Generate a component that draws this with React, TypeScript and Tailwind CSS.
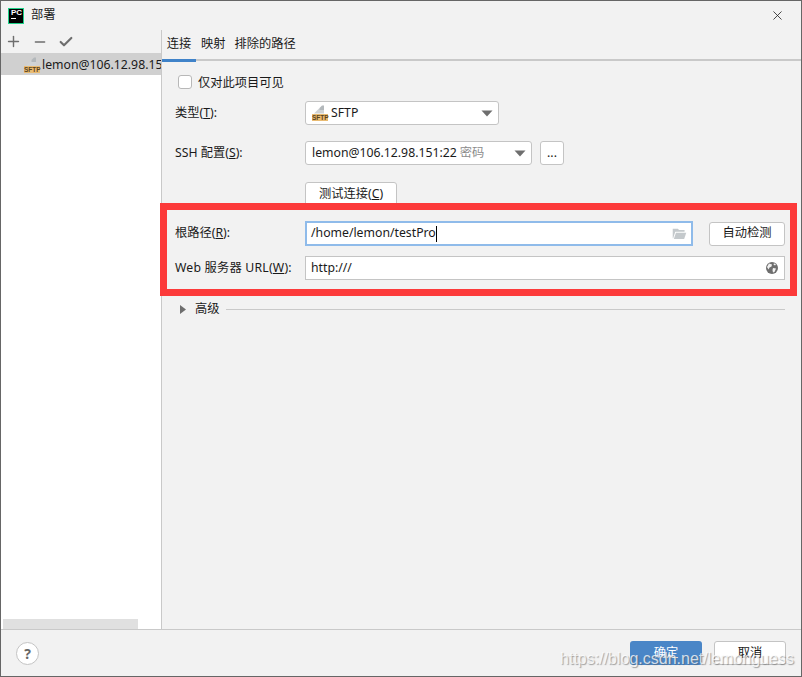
import React from 'react';
import { Plus, Minus, Check, X } from 'lucide-react';

const SftpIcon = () => (
  <div className="relative h-[16px] w-[16px] shrink-0">
    <svg width="16" height="16" viewBox="0 0 16 16" className="absolute left-0 top-0">
      <path d="M2 8.5 L7 3.5 H12 V8.5 Z" fill="#d0d3d5" />
      <path d="M7.5 3 L10 0.5 H12 V5 H7.5 Z" fill="#b3b8bb" />
      <rect x="0" y="9" width="16" height="7" fill="#e9bb72" />
    </svg>
    <span className="absolute left-0 top-[9px] w-[16px] text-center font-['Liberation_Sans',sans-serif] text-[6.5px] font-bold leading-[7px] text-[#5a4420]">
      SFTP
    </span>
  </div>
);

const Caret = () => (
  <svg width="12" height="7" viewBox="0 0 12 7" className="shrink-0">
    <path d="M0.5 0.5 H11.5 L6 6.5 Z" fill="#6e6e6e" />
  </svg>
);

const FolderIcon = () => (
  <svg width="15" height="11" viewBox="0 0 16 13">
    <path d="M0 1 H6 L7.5 2.5 H14 V4.5 H3 L0.5 12 H0 Z" fill="#c4c9cc" />
    <path d="M3.8 5.5 H16 L13.5 13 H1.3 Z" fill="#c4c9cc" />
  </svg>
);

const GlobeIcon = () => (
  <svg width="12" height="12" viewBox="0 0 12 12">
    <circle cx="6" cy="6" r="6" fill="#6e6e6e" />
    <path d="M3 1.5 L6 2.5 L5.5 4.5 L3.5 5.5 L2.5 7.5 L1 5 Z" fill="#f2f2f2" />
    <path d="M7 6 L10 6.5 L8.5 10 L7 10.5 L6.5 8 Z" fill="#f2f2f2" />
    <path d="M8 1.2 L10 2.5 L9 3.5 L7.5 2.5 Z" fill="#f2f2f2" />
  </svg>
);

const Row = ({ label, children, top }: { label: React.ReactNode; children: React.ReactNode; top: string }) => (
  <div className={`flex items-center ${top}`}>
    <div className="w-[130px] shrink-0 text-[#1a1a1a]">{label}</div>
    {children}
  </div>
);

export default function App() {
  return (
    <div className="relative flex h-[677px] w-[802px] flex-col overflow-hidden border border-[#666666] bg-[#f2f2f2] font-['Noto_Sans','Noto_Sans_CJK_SC',sans-serif] text-[12.25px] text-[#1a1a1a]">
      {/* title bar */}
      <div className="flex h-[29px] shrink-0 items-center">
        <div className="ml-[7px] flex h-[16px] w-[16px] flex-col border border-[#1fd189] bg-black px-[2px] font-['Liberation_Sans',sans-serif] text-[8px] font-bold leading-[8px] text-white">
          PC
          <div className="mt-[1px] h-[1px] w-[5px] bg-white" />
        </div>
        <span className="ml-[7px] text-[12.25px]">部署</span>
        <X className="ml-auto mr-[16px] text-[#222222]" size={15} strokeWidth={1.3} />
      </div>

      <div className="flex min-h-0 flex-1">
        {/* sidebar */}
        <div className="flex w-[161px] shrink-0 flex-col border-r border-[#c9c9c9]">
          <div className="flex h-[25px] shrink-0 items-center gap-[10px] border-b-2 border-[#d0d0d0] pl-[4px] text-[#6e6e6e]">
            <Plus size={17} strokeWidth={2} />
            <Minus size={16} strokeWidth={2} />
            <Check size={16} strokeWidth={3.2} />
          </div>
          <div className="flex min-h-0 flex-1 flex-col bg-white">
            <div className="flex h-[20px] shrink-0 items-center overflow-hidden bg-[#d0d0d0] pl-[23px] whitespace-nowrap">
              <SftpIcon />
              <span className="ml-[2px]">lemon@106.12.98.151:22</span>
            </div>
            <div className="mt-auto ml-[2px] h-[10px] w-[135px] bg-[#e0e0e0]" />
          </div>
        </div>

        {/* main panel */}
        <div className="min-w-0 flex-1">
          <div className="flex h-[31px] items-center border-b-2 border-[#c9c9c9]">
            <div className="relative flex h-[31px] w-[34px] items-center justify-center">
              连接
              <div className="absolute bottom-[-2px] left-0 h-[3px] w-[34px] bg-[#4083c9]" />
            </div>
            <span className="ml-[5px]">映射</span>
            <span className="ml-[9px]">排除的路径</span>
          </div>

          <div className="pl-[13px] pr-[16px]">
            <div className="mt-[14px] flex h-[14px] items-center pl-[3px]">
              <div className="h-[14px] w-[14px] rounded-[3px] border border-[#b8b8b8] bg-white" />
              <span className="ml-[6px] translate-y-[1px]">仅对此项目可见</span>
            </div>

            <Row top="mt-[12px]" label={<span>类型(<u>T</u>):</span>}>
              <div className="flex h-[24px] w-[194px] items-center rounded-[3px] border border-[#c4c4c4] bg-white pl-[6px] pr-[5px]">
                <SftpIcon />
                <span className="ml-[3px]">SFTP</span>
                <div className="ml-auto"><Caret /></div>
              </div>
            </Row>

            <Row top="mt-[16px]" label={<span>SSH 配置(<u>S</u>):</span>}>
              <div className="flex h-[24px] w-[227px] items-center rounded-[3px] border border-[#c4c4c4] bg-white pl-[6px] pr-[5px]">
                <span>lemon@106.12.98.151:22</span>
                <span className="ml-[3px] text-[#8c8c8c]">密码</span>
                <div className="ml-auto"><Caret /></div>
              </div>
              <div className="ml-[8px] flex h-[24px] w-[24px] items-center justify-center rounded-[3px] border border-[#c4c4c4] bg-white">...</div>
            </Row>

            <div className="mt-[17px] ml-[130px] flex h-[24px] w-[92px] items-center justify-center rounded-[3px] border border-[#c4c4c4] bg-white">
              <span>测试连接(<u>C</u>)</span>
            </div>

            <Row top="mt-[15px]" label={<span>根路径(<u>R</u>):</span>}>
              <div className="flex h-[25px] w-[388px] items-center border-2 border-[#8fbbea] bg-white pl-[4px] pr-[4px]">
                <span>/home/lemon/testPro</span>
                <div className="h-[16px] w-[1px] bg-black" />
                <div className="ml-auto"><FolderIcon /></div>
              </div>
              <div className="ml-[16px] flex h-[24px] w-[76px] items-center justify-center rounded-[3px] border border-[#c4c4c4] bg-white">自动检测</div>
            </Row>

            <Row top="mt-[10px]" label={<span className="tracking-[0.2px]">Web 服务器 URL(<u>W</u>):</span>}>
              <div className="flex h-[24px] w-[480px] items-center border border-[#c4c4c4] bg-white pl-[5px] pr-[6px]">
                <span>http:///</span>
                <div className="ml-auto"><GlobeIcon /></div>
              </div>
            </Row>

            <div className="mt-[21px] flex h-[16px] items-center pl-[5px]">
              <svg width="6" height="9" viewBox="0 0 6 9"><path d="M0 0 L6 4.5 L0 9 Z" fill="#6e6e6e" /></svg>
              <span className="ml-[9px]">高级</span>
              <div className="ml-[6px] h-[1px] flex-1 bg-[#c9c9c9]" />
            </div>
          </div>
        </div>
      </div>

      {/* footer */}
      <div className="flex h-[47px] shrink-0 items-center border-t border-[#c9c9c9] pr-[15px]">
        <div className="ml-[15px] flex h-[23px] w-[23px] items-center justify-center rounded-full border border-[#c4c4c4] bg-white text-[14px] font-bold text-[#666666]">?</div>
        <div className="ml-auto flex h-[24px] w-[72px] items-center justify-center rounded-[3px] bg-[#4a86c7] text-white">确定</div>
        <div className="ml-[12px] flex h-[24px] w-[72px] items-center justify-center rounded-[3px] border border-[#c4c4c4] bg-white">取消</div>
      </div>

      {/* red highlight drawn on top of the screenshot */}
      <div className="pointer-events-none absolute left-[159px] top-[202px] h-[93px] w-[637px] border-[7px] border-[#fc3a3a]" />
      {/* watermark */}
      <div className="pointer-events-none absolute right-[7px] top-[646px] font-['Liberation_Sans',sans-serif] text-[16px] text-white/75 [text-shadow:1px_1px_1px_rgba(90,90,90,0.55)]">
        https://blog.csdn.net/lemonguess
      </div>
    </div>
  );
}
